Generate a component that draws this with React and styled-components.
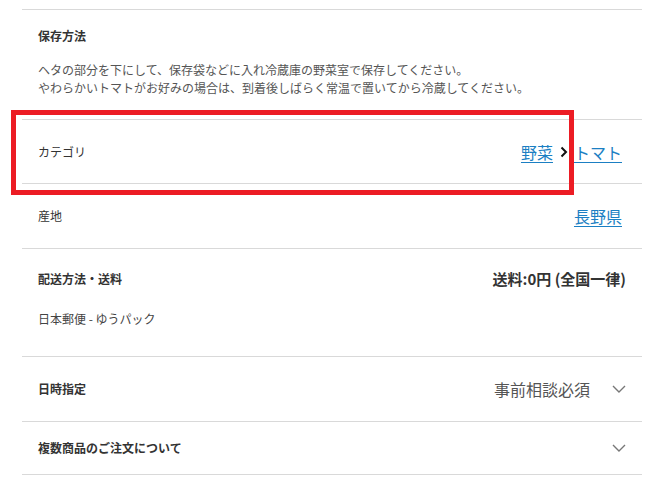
import React from 'react';
import styled, { createGlobalStyle } from 'styled-components';

const GlobalStyle = createGlobalStyle`
  body {
    margin: 0;
    background: #fff;
    font-family: 'Noto Sans CJK JP', 'Noto Sans', sans-serif;
    color: #333;
  }
`;

const Page = styled.div`
  width: 620px;
  margin: 9px 0 0 22px;
  border-top: 1px solid #d9d9d9;
`;

const Section = styled.div`
  padding: 17px 16px 22px;
  border-bottom: 1px solid #d9d9d9;
`;

const Row = styled.div`
  position: relative;
  display: flex;
  align-items: center;
  justify-content: space-between;
  min-height: ${(p) => p.height}px;
  padding: 0 16px;
  border-bottom: 1px solid #d9d9d9;
`;

const Label = styled.div`
  font-size: 12px;
  line-height: 18px;
  font-weight: ${(p) => (p.bold ? 700 : 400)};
  color: #333;
`;

const Text = styled.p`
  margin: 16px 0 0;
  font-size: 12px;
  line-height: 18px;
  color: #555;
`;

const Links = styled.div`
  display: flex;
  align-items: center;
  margin-right: 4px;
  font-size: 16px;
  line-height: 20px;
`;

const Link = styled.a`
  color: #1b7fc3;
  text-decoration: underline;
  text-underline-offset: 3px;
  cursor: pointer;
`;

const Crumb = styled.span`
  display: flex;
  margin: 0 6px 0 7px;
`;

const Highlight = styled.div`
  position: absolute;
  left: -11px;
  top: -10px;
  width: 563px;
  height: 85px;
  box-sizing: border-box;
  border: 5px solid #ec1c24;
  pointer-events: none;
`;

const Shipping = styled.div`
  padding: 21px 16px 28px;
  border-bottom: 1px solid #d9d9d9;
`;

const ShippingHead = styled.div`
  display: flex;
  justify-content: space-between;
  align-items: center;
`;

const Fee = styled.div`
  font-size: 15px;
  line-height: 18px;
  font-weight: 700;
  color: #333;
`;

const Sub = styled.div`
  margin-top: 22px;
  font-size: 12px;
  line-height: 18px;
  color: #444;
`;

const Right = styled.div`
  display: flex;
  align-items: center;
  gap: 22px;
`;

const Value = styled.span`
  font-size: 16px;
  line-height: 20px;
  color: #555;
`;

const Chevron = () => (
  <svg width="14" height="8" viewBox="0 0 14 8">
    <path d="M1 1l6 6 6-6" fill="none" stroke="#777" strokeWidth="1.4" />
  </svg>
);

const Arrow = () => (
  <svg width="8" height="12" viewBox="0 0 8 12">
    <path d="M1.5 1.5L6 6l-4.5 4.5" fill="none" stroke="#111" strokeWidth="2" />
  </svg>
);

export default function App() {
  return (
    <>
      <GlobalStyle />
      <Page>
        <Section>
          <Label bold>保存方法</Label>
          <Text>
            ヘタの部分を下にして、保存袋などに入れ冷蔵庫の野菜室で保存してください。
            <br />
            やわらかいトマトがお好みの場合は、到着後しばらく常温で置いてから冷蔵してください。
          </Text>
        </Section>

        <Row height={63}>
          <Label>カテゴリ</Label>
          <Links>
            <Link>野菜</Link>
            <Crumb>
              <Arrow />
            </Crumb>
            <Link>トマト</Link>
          </Links>
          <Highlight />
        </Row>

        <Row height={64}>
          <Label>産地</Label>
          <Links>
            <Link>長野県</Link>
          </Links>
        </Row>

        <Shipping>
          <ShippingHead>
            <Label bold>配送方法・送料</Label>
            <Fee>送料:0円 (全国一律)</Fee>
          </ShippingHead>
          <Sub>日本郵便 - ゆうパック</Sub>
        </Shipping>

        <Row height={64}>
          <Label bold>日時指定</Label>
          <Right>
            <Value>事前相談必須</Value>
            <Chevron />
          </Right>
        </Row>

        <Row height={52}>
          <Label bold>複数商品のご注文について</Label>
          <Chevron />
        </Row>
      </Page>
    </>
  );
}
